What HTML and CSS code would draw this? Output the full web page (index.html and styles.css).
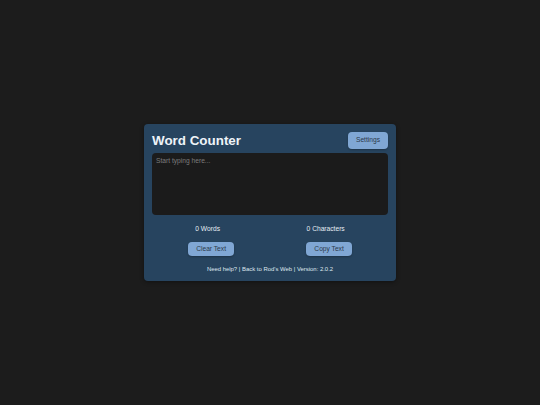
FILE: index.html
```html
<!DOCTYPE html>
<html lang="en">
<head>
<meta charset="utf-8">
<title>Word Counter</title>
<link rel="stylesheet" href="styles.css">
</head>
<body>
<main class="card">
  <header class="card-header">
    <h1 class="title">Word Counter</h1>
    <button class="btn btn-settings" type="button">Settings</button>
  </header>
  <textarea class="editor" placeholder="Start typing here..."></textarea>
  <div class="row counts">
    <span class="count">0 Words</span>
    <span class="count">0 Characters</span>
  </div>
  <div class="row actions">
    <button class="btn" type="button">Clear Text</button>
    <button class="btn" type="button">Copy Text</button>
  </div>
  <footer class="footer">Need help? | Back to Rod's Web | Version: 2.0.2</footer>
</main>
</body>
</html>
```
FILE: styles.css
```css
html, body {
  margin: 0;
  height: 100%;
}
body {
  background: #1c1c1c;
  font-family: "Liberation Sans", Arial, sans-serif;
  color: #e6edf3;
  display: flex;
  align-items: center;
  justify-content: center;
}
.card {
  width: 236px;
  padding: 8px;
  background: #27445f;
  border-radius: 4px;
  box-shadow: 0 1px 4px rgba(0, 0, 0, 0.4);
  display: flex;
  flex-direction: column;
}
.card-header {
  display: flex;
  align-items: center;
  justify-content: space-between;
  height: 16.5px;
}
.title {
  margin: 0;
  font-size: 13.4px;
  font-weight: bold;
  color: #eef3f8;
  line-height: 1;
}
.btn {
  font-family: "Liberation Sans", Arial, sans-serif;
  font-size: 6.67px;
  line-height: 1;
  color: #2b394a;
  background: #80a7d4;
  border: none;
  border-radius: 4px;
  padding: 0 8px;
  height: 14.5px;
  margin: 0;
  box-shadow: 0 1px 2px rgba(0, 0, 0, 0.25);
}
.btn-settings {
  height: 16.5px;
}
.editor {
  display: block;
  box-sizing: border-box;
  width: 236px;
  height: 62.5px;
  margin: 4.3px 0 0;
  padding: 4px;
  background: #1b1b1b;
  border: none;
  border-radius: 4px;
  resize: none;
  font-family: "Liberation Sans", Arial, sans-serif;
  font-size: 6.67px;
  color: #e6edf3;
  outline: none;
}
.editor::placeholder {
  color: #7c7c7c;
}
.row {
  display: flex;
  justify-content: space-around;
  align-items: center;
}
.counts {
  margin-top: 9.5px;
  height: 8px;
}
.count {
  font-size: 6.67px;
  color: #e6edf3;
}
.actions {
  margin-top: 9px;
}
.footer {
  margin-top: 8.5px;
  text-align: center;
  font-size: 5.93px;
  line-height: 8px;
  color: #dfe7ef;
}
```
